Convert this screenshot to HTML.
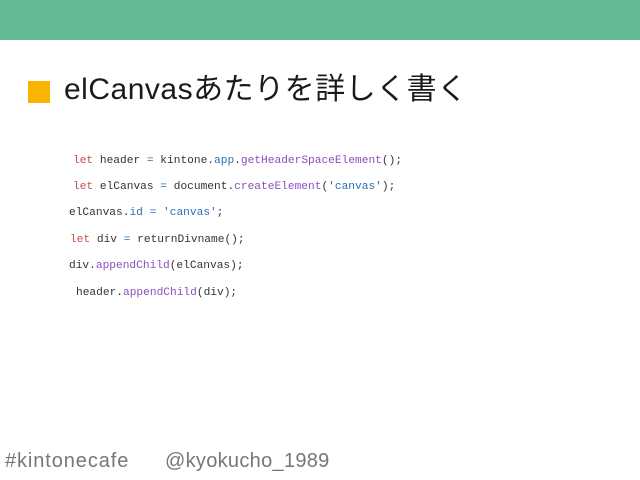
<!DOCTYPE html>
<html><head><meta charset="utf-8"><style>
html,body{margin:0;padding:0;width:640px;height:480px;background:#fff;overflow:hidden;position:relative}
.bar{position:absolute;left:0;top:0;width:640px;height:40px;background:#64ba96}
.sq{position:absolute;left:28px;top:81px;width:22px;height:22px;background:#f8b500}
.title{position:absolute;left:64px;top:72px;font-family:"Liberation Sans","Noto Sans CJK JP",sans-serif;font-size:30px;line-height:36px;color:#1a1a1a;white-space:nowrap;letter-spacing:0.5px}
.code{position:absolute;font-family:"Liberation Mono",monospace;font-size:11.2px;line-height:14px;color:#333;white-space:pre}
.k{color:#c0504d}.o{color:#2a6fb5}.f{color:#8a4fbf}.s{color:#2a6fb5}
.foot{position:absolute;top:449px;font-family:"Liberation Sans",sans-serif;font-size:20px;line-height:24px;color:#777;white-space:nowrap}
</style></head><body>
<div class="bar"></div>
<div class="sq"></div>
<div class="title">elCanvasあたりを詳しく書く</div>
<div class="code" style="left:73px;top:154px"><span class="k">let</span> header <span class="o">=</span> kintone.<span class="o">app</span>.<span class="f">getHeaderSpaceElement</span>();</div>
<div class="code" style="left:73px;top:180px"><span class="k">let</span> elCanvas <span class="o">=</span> document.<span class="f">createElement</span>(<span class="s">'canvas'</span>);</div>
<div class="code" style="left:69px;top:206px">elCanvas.<span class="o">id</span> <span class="o">=</span> <span class="s">'canvas'</span>;</div>
<div class="code" style="left:70px;top:233px"><span class="k">let</span> div <span class="o">=</span> returnDivname();</div>
<div class="code" style="left:69px;top:259px">div.<span class="f">appendChild</span>(elCanvas);</div>
<div class="code" style="left:76px;top:286px">header.<span class="f">appendChild</span>(div);</div>
<div class="foot" style="left:5px;letter-spacing:0.9px">#kintonecafe</div>
<div class="foot" style="left:165px;letter-spacing:0.3px">@kyokucho_1989</div>
</body></html>
